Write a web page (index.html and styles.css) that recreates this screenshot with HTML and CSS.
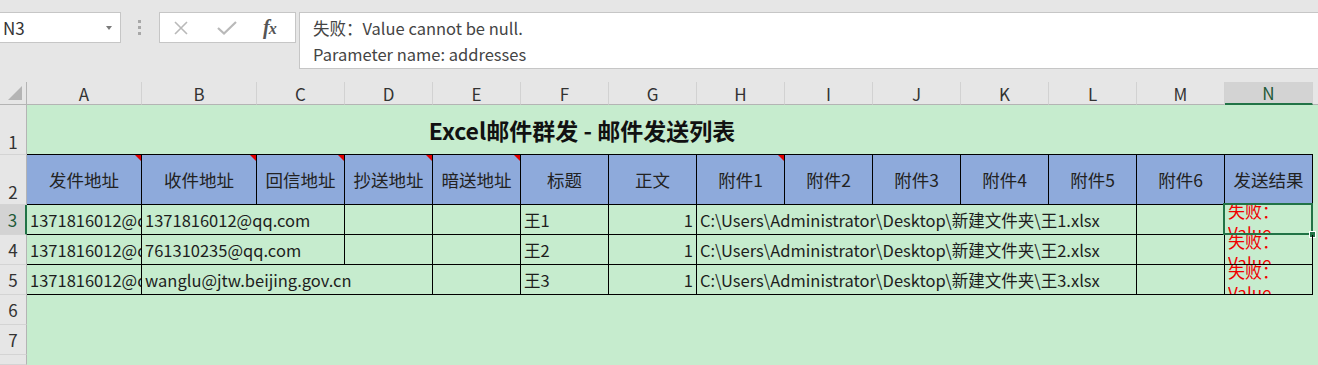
FILE: index.html
```html
<!DOCTYPE html>
<html lang="zh-CN">
<head>
    <meta charset="UTF-8">
    <meta name="viewport" content="width=device-width, initial-scale=1.0">
    <title>Excel邮件群发 - 邮件发送列表</title>
    <link rel="stylesheet" href="styles.css">
</head>
<body>
    <div class="toolbar">
        <div class="name-box">N3<span class="caret"></span></div>
        <div class="grip"><i></i><i></i><i></i></div>
        <div class="fx-box">
            <svg class="btn-cancel" width="16" height="14" viewBox="0 0 16 14"><path d="M2 1L14 13M14 1L2 13"/></svg>
            <svg class="btn-enter" width="20" height="14" viewBox="0 0 20 14"><path d="M1 7L7 12.5L19 1"/></svg>
            <span class="fx">f<span>x</span></span>
        </div>
        <div class="formula">失败：Value cannot be null.<br>Parameter name: addresses</div>
    </div>

    <div class="sheet">
        <!-- column headers -->
        <div class="corner"><span class="corner-tri"></span></div>
        <div class="ch">A</div>
        <div class="ch">B</div>
        <div class="ch">C</div>
        <div class="ch">D</div>
        <div class="ch">E</div>
        <div class="ch">F</div>
        <div class="ch">G</div>
        <div class="ch">H</div>
        <div class="ch">I</div>
        <div class="ch">J</div>
        <div class="ch">K</div>
        <div class="ch">L</div>
        <div class="ch">M</div>
        <div class="ch ch-sel">N</div>
        <div class="ch ch-rest"></div>

        <!-- row 1 -->
        <div class="rh rh-tall">1</div>
        <div class="title">Excel邮件群发 - 邮件发送列表</div>
        <div class="cell under"></div>
        <div class="cell under"></div>
        <div class="cell"></div>

        <!-- row 2 -->
        <div class="rh rh-tall">2</div>
        <div class="hd note">发件地址</div>
        <div class="hd note">收件地址</div>
        <div class="hd note">回信地址</div>
        <div class="hd note">抄送地址</div>
        <div class="hd note">暗送地址</div>
        <div class="hd">标题</div>
        <div class="hd">正文</div>
        <div class="hd note">附件1</div>
        <div class="hd">附件2</div>
        <div class="hd">附件3</div>
        <div class="hd">附件4</div>
        <div class="hd">附件5</div>
        <div class="hd">附件6</div>
        <div class="hd">发送结果</div>
        <div class="cell"></div>

        <!-- row 3 -->
        <div class="rh rh-sel">3</div>
        <div class="cell b">1371816012@qq.com</div>
        <div class="cell b span2">1371816012@qq.com</div>
        <div class="cell b"></div>
        <div class="cell b"></div>
        <div class="cell b">王1</div>
        <div class="cell b num">1</div>
        <div class="cell b span5">C:\Users\Administrator\Desktop\新建文件夹\王1.xlsx</div>
        <div class="cell b"></div>
        <div class="cell b err active"><div class="err-text"><span>失败：Value cannot be null. Parameter name: addresses</span></div><span class="handle"></span></div>
        <div class="cell"></div>

        <!-- row 4 -->
        <div class="rh">4</div>
        <div class="cell b">1371816012@qq.com</div>
        <div class="cell b span2">761310235@qq.com</div>
        <div class="cell b"></div>
        <div class="cell b"></div>
        <div class="cell b">王2</div>
        <div class="cell b num">1</div>
        <div class="cell b span5">C:\Users\Administrator\Desktop\新建文件夹\王2.xlsx</div>
        <div class="cell b"></div>
        <div class="cell b err"><div class="err-text"><span>失败：Value cannot be null. Parameter name: addresses</span></div></div>
        <div class="cell"></div>

        <!-- row 5 -->
        <div class="rh">5</div>
        <div class="cell b">1371816012@qq.com</div>
        <div class="cell b span3">wanglu@jtw.beijing.gov.cn</div>
        <div class="cell b"></div>
        <div class="cell b">王3</div>
        <div class="cell b num">1</div>
        <div class="cell b span5">C:\Users\Administrator\Desktop\新建文件夹\王3.xlsx</div>
        <div class="cell b"></div>
        <div class="cell b err"><div class="err-text"><span>失败：Value cannot be null. Parameter name: addresses</span></div></div>
        <div class="cell"></div>

        <!-- rows 6-8 -->
        <div class="rh">6</div>
        <div class="cell span-all"></div>
        <div class="rh">7</div>
        <div class="cell span-all"></div>
        <div class="rh"></div>
        <div class="cell span-all"></div>
    </div>
</body>
</html>
```

FILE: styles.css
```css
body {
    margin: 0;
    padding: 0;
    height: 365px;
    overflow: hidden;
    font-family: "Noto Sans CJK SC", "Noto Sans", sans-serif;
    background-color: #e6e6e6;
    color: #222;
}

/* formula bar */
.toolbar {
    display: flex;
    align-items: flex-start;
    height: 82px;
    padding-top: 12px;
    box-sizing: border-box;
}

.name-box {
    position: relative;
    width: 122px;
    height: 31px;
    margin-left: -1px;
    box-sizing: border-box;
    background: #fff;
    border: 1px solid #c6c6c6;
    padding-left: 3px;
    font-size: 17px;
    line-height: 29px;
    color: #333;
}

.caret {
    position: absolute;
    right: 8px;
    top: 13px;
    border-style: solid;
    border-width: 4px 3.5px 0 3.5px;
    border-color: #7a7a7a transparent transparent transparent;
}

.grip {
    display: flex;
    flex-direction: column;
    gap: 3px;
    margin: 8px 18px 0 17px;
}

.grip i {
    display: block;
    width: 3px;
    height: 3px;
    background: #a8a8a8;
}

.fx-box {
    display: flex;
    align-items: center;
    width: 137px;
    height: 31px;
    box-sizing: border-box;
    background: #fff;
    border: 1px solid #c6c6c6;
    margin-right: 3px;
}

.fx-box svg {
    fill: none;
    stroke: #b9b9b9;
}

.btn-cancel {
    margin-left: 13px;
    stroke-width: 1.6;
}

.btn-enter {
    margin-left: 28px;
    stroke-width: 2.2;
}

.fx {
    margin-left: 26px;
    font-family: "Liberation Serif", serif;
    font-style: italic;
    font-weight: bold;
    font-size: 20px;
    color: #555;
    letter-spacing: -1px;
}

.fx span {
    font-size: 16px;
}

.formula {
    flex: 1;
    height: 57px;
    box-sizing: border-box;
    background: #fff;
    border: 1px solid #c6c6c6;
    border-right: none;
    padding: 2px 0 0 13px;
    font-size: 16.5px;
    line-height: 26px;
    color: #444;
}

/* grid */
.sheet {
    display: grid;
    grid-template-columns: 27px 115px 115px repeat(12, 88px) 1fr;
    grid-template-rows: 23px 50px 50px repeat(5, 30px) 10px;
    background-color: #c6ecce;
}

.sheet > div {
    box-sizing: border-box;
    min-width: 0;
}

.corner {
    position: relative;
    background: #e6e6e6;
    border-right: 1px solid #b4b4b4;
    border-bottom: 1px solid #b4b4b4;
}

.corner-tri {
    position: absolute;
    right: 4px;
    bottom: 4px;
    border-style: solid;
    border-width: 0 0 14px 14px;
    border-color: transparent transparent #b4b4b4 transparent;
}

.ch {
    display: flex;
    align-items: center;
    justify-content: center;
    background: #e6e6e6;
    border-right: 1px solid #d2d2d2;
    border-bottom: 1px solid #b4b4b4;
    font-size: 17px;
    color: #333;
}

.ch-sel {
    background: #d3d3d3;
    border-bottom: 2px solid #217346;
    color: #1f5a38;
}

.ch-rest {
    border-right: none;
}

.rh {
    display: flex;
    align-items: center;
    justify-content: center;
    background: #e6e6e6;
    border-right: 1px solid #b4b4b4;
    border-bottom: 1px solid #d4d4d4;
    font-size: 17px;
    color: #333;
}

.rh-tall {
    align-items: flex-end;
    padding-bottom: 0;
}

.rh-sel {
    background: #d3d3d3;
    border-right: 2px solid #217346;
    color: #1f5a38;
}

.title {
    grid-column: span 12;
    display: flex;
    align-items: flex-end;
    justify-content: center;
    padding-bottom: 9px;
    border-bottom: 1px solid #000;
    font-size: 23px;
    font-weight: bold;
    line-height: 30px;
    color: #111;
}

.under {
    border-bottom: 1px solid #000;
}

.hd {
    position: relative;
    display: flex;
    align-items: center;
    justify-content: center;
    background: #8eaadb;
    border-right: 1px solid #000;
    border-bottom: 1px solid #000;
    font-size: 17.5px;
    color: #222;
}

/* red comment marker */
.note::after {
    content: "";
    position: absolute;
    top: 0;
    right: 0;
    border-style: solid;
    border-width: 0 6px 6px 0;
    border-color: transparent #e00000 transparent transparent;
}

.cell {
    display: flex;
    align-items: center;
    padding: 0 3px;
    white-space: nowrap;
    overflow: hidden;
    font-size: 16.5px;
    color: #1d1d1d;
}

.b {
    border-right: 1px solid #000;
    border-bottom: 1px solid #000;
}

.num {
    justify-content: flex-end;
}

.span2 { grid-column: span 2; }
.span3 { grid-column: span 3; }
.span5 { grid-column: span 5; }
.span-all { grid-column: span 15; }

.err {
    position: relative;
    display: block;
    overflow: visible;
    white-space: normal;
    color: #f00000;
    font-size: 17px;
}

.err-text {
    height: 29px;
    overflow: hidden;
}

.err-text span {
    display: block;
    margin-top: -5px;
    line-height: 22px;
}

/* selected cell */
.active::before {
    content: "";
    position: absolute;
    top: -2px;
    left: -2px;
    right: -1px;
    bottom: -1px;
    border: 2px solid #217346;
    pointer-events: none;
}

.handle {
    position: absolute;
    right: -4px;
    bottom: -4px;
    width: 5px;
    height: 5px;
    background: #217346;
    border: 1px solid #fff;
}
```
